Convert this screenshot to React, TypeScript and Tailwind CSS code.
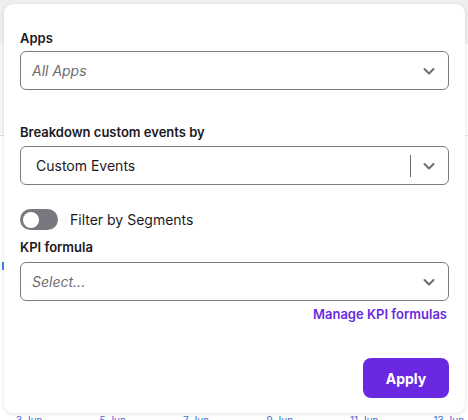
import React from "react";

const Chevron = () => (
  <svg width="14" height="14" viewBox="0 0 14 14" fill="none">
    <path d="M2.5 5l4.5 4.5L11.5 5" stroke="#6b6a70" strokeWidth="2" strokeLinecap="round" strokeLinejoin="round" />
  </svg>
);

export default function App() {
  return (
    <div
      className="relative w-[468px] h-[420px] overflow-hidden bg-white"
      style={{ fontFamily: "Inter, 'Noto Sans', sans-serif" }}
    >
      {/* backdrop */}
      <div className="absolute inset-x-0 top-0 h-[44px] bg-[#efeff0]" />
      <div className="absolute left-0 top-[44px] w-[4px] h-[90px] bg-[#f6f6f7]" />
      <div className="absolute left-0 top-[135px] w-full h-px bg-[#e2e2e4]" />
      <div className="absolute left-[2px] top-[262px] w-[2px] h-[8px] bg-[#3b82f6]" />
      <div className="absolute left-0 bottom-0 w-full h-[8px] text-[10px] text-[#4b6bd0] leading-none">
        {["3 Jun", "5 Jun", "7 Jun", "9 Jun", "11 Jun", "13 Jun"].map((t, i) => (
          <span key={i} className="absolute top-[3px]" style={{ left: 16 + i * 83.5 }}>{t}</span>
        ))}
      </div>

      {/* card */}
      <div className="absolute left-[4px] top-[4px] w-[461px] h-[409px] bg-white rounded-[9px] shadow-[0_1px_4px_rgba(0,0,0,0.12)] px-[16px] pt-[25px] flex flex-col">
        <div className="text-[13px] font-semibold text-[#1b1a1f] leading-[18px]">Apps</div>
        <div className="mt-[4px] h-[39px] border border-[#7c7b82] rounded-[6px] flex items-center pl-[11px] pr-[12px]">
          <span className="flex-1 italic text-[14px] text-[#6d6c72]">All Apps</span>
          <Chevron />
        </div>

        <div className="mt-[33px] text-[13px] font-semibold text-[#1b1a1f] leading-[18px]">Breakdown custom events by</div>
        <div className="mt-[5px] h-[39px] border border-[#7c7b82] rounded-[6px] flex items-center pl-[15px] pr-[12px]">
          <span className="flex-1 text-[14px] text-[#1b1a1f]">Custom Events</span>
          <div className="w-px h-[22px] bg-[#6b6a70] mr-[11px]" />
          <Chevron />
        </div>

        <div className="mt-[24px] h-[21px] flex items-center gap-[12px]">
          <div className="w-[38px] h-[21px] rounded-full bg-[#7a787f] flex items-center px-[3px]">
            <div className="w-[16px] h-[16px] rounded-full bg-white" />
          </div>
          <span className="text-[14px] text-[#1b1a1f]">Filter by Segments</span>
        </div>

        <div className="mt-[8px] text-[13px] font-semibold text-[#1b1a1f] leading-[18px]">KPI formula</div>
        <div className="mt-[6px] h-[39px] border border-[#7c7b82] rounded-[6px] flex items-center pl-[11px] pr-[12px]">
          <span className="flex-1 italic text-[14px] text-[#6d6c72]">Select...</span>
          <Chevron />
        </div>

        <div className="mt-[4px] h-[20px] flex items-center justify-end pr-[2px]">
          <span className="text-[13px] font-semibold text-[#6a2ae0]">Manage KPI formulas</span>
        </div>

        <div className="mt-[33px] flex justify-end">
          <button className="w-[86px] h-[40px] rounded-[8px] bg-[#6a28e0] text-white text-[14px] font-bold">Apply</button>
        </div>
      </div>
    </div>
  );
}
